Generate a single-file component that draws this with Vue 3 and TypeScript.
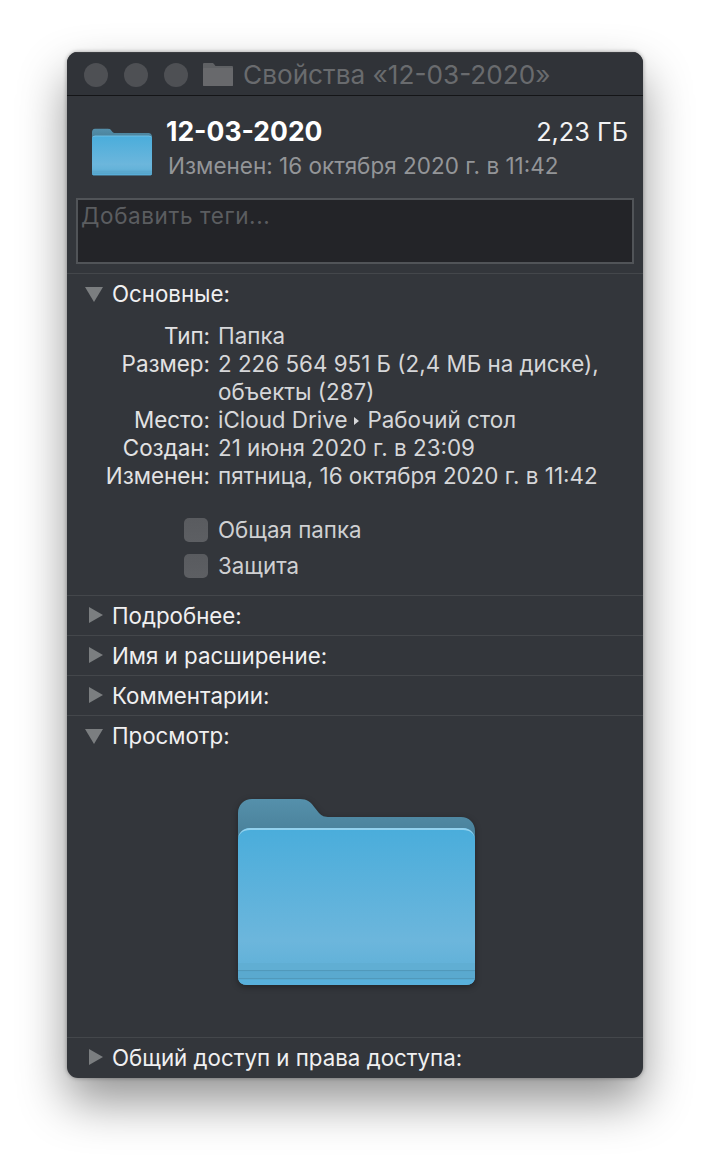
<script setup lang="ts">
interface InfoRow {
  label: string;
  value: string;
  crumb?: string;
}

const infoRows: InfoRow[] = [
  { label: 'Тип:', value: 'Папка' },
  { label: 'Размер:', value: '2 226 564 951 Б (2,4 МБ на диске),' },
  { label: '', value: 'объекты (287)' },
  { label: 'Место:', value: 'iCloud Drive', crumb: 'Рабочий стол' },
  { label: 'Создан:', value: '21 июня 2020 г. в 23:09' },
  { label: 'Изменен:', value: 'пятница, 16 октября 2020 г. в 11:42' },
];

const checks = ['Общая папка', 'Защита'];
const closedSections = ['Подробнее:', 'Имя и расширение:', 'Комментарии:'];
</script>

<template>
  <div class="page">
    <div class="window">
      <div class="titlebar">
        <span class="dot"></span>
        <span class="dot"></span>
        <span class="dot"></span>
        <svg class="title-icon" viewBox="0 0 30 23">
          <path d="M1 0h8c1 0 1.600.4 2.200 1.200L12.500 3H29a1 1 0 0 1 1 1v18a1 1 0 0 1-1 1H1a1 1 0 0 1-1-1V1a1 1 0 0 1 1-1z" fill="#5f6164" />
          <rect y="5" width="30" height="18" rx="1" fill="#68696c" />
        </svg>
        <span class="title-text">Свойства «12-03-2020»</span>
      </div>

      <div class="summary">
        <svg class="folder-small" viewBox="0 0 237 186">
          <use href="#folder" />
        </svg>
        <div class="summary-text">
          <div class="summary-top">
            <span class="name">12-03-2020</span>
            <span class="size">2,23 ГБ</span>
          </div>
          <div class="modified">Изменен: 16 октября 2020 г. в 11:42</div>
        </div>
      </div>

      <div class="tags">Добавить теги...</div>

      <section class="section general">
        <div class="section-head">
          <span class="arrow down"></span>
          <span>Основные:</span>
        </div>
        <div class="info">
          <template v-for="row in infoRows" :key="row.value">
            <span class="info-label">{{ row.label }}</span>
            <span class="info-value">
              {{ row.value }}<template v-if="row.crumb"><span class="crumb-arrow"></span>{{ row.crumb }}</template>
            </span>
          </template>
        </div>
        <div class="checks">
          <label v-for="item in checks" :key="item" class="check">
            <span class="box"></span>
            <span class="check-text">{{ item }}</span>
          </label>
        </div>
      </section>

      <section v-for="item in closedSections" :key="item" class="section">
        <div class="section-head">
          <span class="arrow right"></span>
          <span>{{ item }}</span>
        </div>
      </section>

      <section class="section preview">
        <div class="section-head">
          <span class="arrow down"></span>
          <span>Просмотр:</span>
        </div>
        <div class="preview-body">
          <svg class="folder-big" viewBox="0 0 237 186">
            <defs>
              <linearGradient id="folderBack" x1="0" y1="0" x2="0" y2="1">
                <stop offset="0" stop-color="#5590ab" />
                <stop offset="1" stop-color="#42778f" />
              </linearGradient>
              <linearGradient id="folderFront" x1="0" y1="0" x2="0" y2="1">
                <stop offset="0" stop-color="#4aaddb" />
                <stop offset="0.72" stop-color="#6cb6dc" />
                <stop offset="1" stop-color="#5aaed6" />
              </linearGradient>
              <symbol id="folder" viewBox="0 0 237 186">
                <path d="M14 0H62C69 0 73 3 77 9L81 14C84 17 86 18 92 18H223C231 18 237 24 237 32V60H0V14C0 6 6 0 14 0Z" fill="url(#folderBack)" />
                <path d="M12 29H225C232 29 237 34 237 41V178C237 183 233 186 228 186H9C4 186 0 183 0 178V41C0 34 5 29 12 29Z" fill="url(#folderFront)" />
                <path d="M0 41C0 34 5 29 12 29H225C232 29 237 34 237 41C237 35 232 31 225 31H12C5 31 0 35 0 41Z" fill="#93d2ee" />
                <rect y="164" width="237" height="7" fill="#60aed3" />
                <rect y="171" width="237" height="1.500" fill="#5199bb" />
                <rect y="172.500" width="237" height="6.500" fill="#5aa9cf" />
                <rect y="179" width="237" height="1.500" fill="#5199bb" />
                <path d="M0 180.500H237V178C237 183 233 186 228 186H9C4 186 0 183 0 178Z" fill="#58b0dc" />
              </symbol>
            </defs>
            <use href="#folder" />
          </svg>
        </div>
      </section>

      <section class="section">
        <div class="section-head">
          <span class="arrow right"></span>
          <span>Общий доступ и права доступа:</span>
        </div>
      </section>
    </div>
  </div>
</template>

<style scoped>
.page {
  width: 710px;
  height: 1162px;
  box-sizing: border-box;
  padding: 52px 67px 0;
  background: #fff;
  overflow: hidden;
  font-family: Inter, Roboto, "Liberation Sans", sans-serif;
  font-size: 22.300px;
}

.window {
  width: 576px;
  height: 1026px;
  box-sizing: border-box;
  background: #33363b;
  border-radius: 11px;
  overflow: hidden;
  box-shadow: 0 0 4px rgba(0, 0, 0, 0.35), 0 24px 48px rgba(0, 0, 0, 0.42);
}

.titlebar {
  height: 44px;
  box-sizing: border-box;
  display: flex;
  align-items: center;
  padding: 1px 0 0 17px;
  background: #303338;
  border-top: 1px solid #3c3e42;
  border-bottom: 1px solid #141517;
}

.dot {
  width: 24px;
  height: 24px;
  border-radius: 50%;
  background: #4e5054;
  margin-right: 16px;
}

.title-icon {
  width: 30px;
  height: 23px;
  margin: 0 10px 0 -1px;
}

.title-text {
  color: #696b6e;
  font-size: 26.200px;
}

.summary {
  display: flex;
  padding: 31px 15px 0 25px;
  height: 102px;
  box-sizing: border-box;
}

.folder-small {
  width: 60px;
  height: 48px;
  margin-top: 1px;
  flex: none;
}

.summary-text {
  flex: 1;
  margin: -12px 0 0 14px;
}

.summary-top {
  display: flex;
  justify-content: space-between;
  align-items: baseline;
  height: 32px;
  line-height: 32px;
}

.name {
  color: #fff;
  font-weight: 700;
  font-size: 26.500px;
}

.size {
  color: #f2f2f3;
  font-size: 25.300px;
}

.modified {
  color: #939598;
  font-size: 22.500px;
  line-height: 28px;
  margin: 5px 0 0 2px;
}

.tags {
  margin: 0 9px;
  height: 66px;
  box-sizing: border-box;
  border: 2px solid #515458;
  background: #232428;
  color: #5b5d60;
  font-size: 22.500px;
  letter-spacing: 0.6px;
  line-height: 32px;
  padding-left: 3px;
}

.section {
  height: 40px;
  box-sizing: border-box;
  border-top: 1px solid #44474b;
}

.general {
  height: 322px;
  margin-top: 9px;
}

.preview {
  height: 322px;
}

.section-head {
  display: flex;
  align-items: center;
  height: 38px;
  padding-left: 45px;
  position: relative;
  color: #f0f0f1;
}

.arrow {
  position: absolute;
  width: 0;
  height: 0;
}

.arrow.down {
  left: 18px;
  top: 13px;
  border-left: 9px solid transparent;
  border-right: 9px solid transparent;
  border-top: 15px solid #7b7e80;
}

.arrow.right {
  left: 22px;
  top: 11px;
  border-top: 8.500px solid transparent;
  border-bottom: 8.500px solid transparent;
  border-left: 14px solid #7b7e80;
}

.info {
  display: grid;
  grid-template-columns: 143px 1fr;
  column-gap: 8px;
  grid-auto-rows: 28px;
  margin-top: 10px;
  line-height: 28px;
  font-size: 22.400px;
}

.info-label {
  text-align: right;
  color: #e2e2e3;
}

.info-value {
  color: #d6d7d9;
  white-space: nowrap;
}

.crumb-arrow {
  display: inline-block;
  width: 0;
  height: 0;
  margin: 0 8px 1px 7px;
  vertical-align: middle;
  border-top: 4px solid transparent;
  border-bottom: 4px solid transparent;
  border-left: 5px solid #d6d7d9;
}

.checks {
  display: flex;
  flex-direction: column;
  gap: 12px;
  margin: 28px 0 0 117px;
}

.check {
  display: flex;
  align-items: center;
  gap: 10px;
  color: #cfd0d2;
  height: 24px;
}

.check-text {
  padding-bottom: 2px;
}

.box {
  width: 24px;
  height: 24px;
  box-sizing: border-box;
  border-radius: 5px;
  background: linear-gradient(#595b5f, #5d5f63);
}

.preview-body {
  display: flex;
  justify-content: center;
  padding: 45px 0 0 2px;
}

.folder-big {
  width: 237px;
  height: 186px;
  filter: drop-shadow(0 2px 3px rgba(0, 0, 0, 0.35));
}
</style>

<style>
html,
body {
  margin: 0;
  background: #fff;
}
</style>
